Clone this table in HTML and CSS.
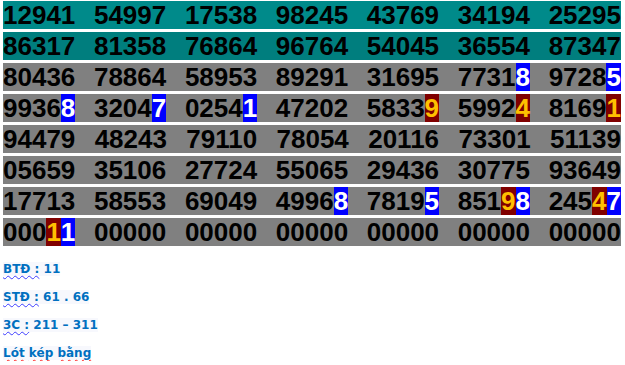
FILE: index.html
```html
<!DOCTYPE html>
<html>
<head>
<meta charset="utf-8">
<link rel="stylesheet" href="styles.css">
</head>
<body>
<div class="board">
  <div class="row teal1">
    <span class="num">12941</span><span class="num">54997</span><span class="num">17538</span><span class="num">98245</span><span class="num">43769</span><span class="num">34194</span><span class="num">25295</span>
  </div>
  <div class="row teal2">
    <span class="num">86317</span><span class="num">81358</span><span class="num">76864</span><span class="num">96764</span><span class="num">54045</span><span class="num">36554</span><span class="num">87347</span>
  </div>
  <div class="row gray">
    <span class="num">80436</span><span class="num">78864</span><span class="num">58953</span><span class="num">89291</span><span class="num">31695</span><span class="num">7731<b class="hb">8</b></span><span class="num">9728<b class="hb">5</b></span>
  </div>
  <div class="row gray">
    <span class="num">9936<b class="hb">8</b></span><span class="num">3204<b class="hb">7</b></span><span class="num">0254<b class="hb">1</b></span><span class="num">47202</span><span class="num">5833<b class="hr">9</b></span><span class="num">5992<b class="hr">4</b></span><span class="num">8169<b class="hr">1</b></span>
  </div>
  <div class="row gray">
    <span class="num">94479</span><span class="num">48243</span><span class="num">79110</span><span class="num">78054</span><span class="num">20116</span><span class="num">73301</span><span class="num">51139</span>
  </div>
  <div class="row gray">
    <span class="num">05659</span><span class="num">35106</span><span class="num">27724</span><span class="num">55065</span><span class="num">29436</span><span class="num">30775</span><span class="num">93649</span>
  </div>
  <div class="row gray">
    <span class="num">17713</span><span class="num">58553</span><span class="num">69049</span><span class="num">4996<b class="hb">8</b></span><span class="num">7819<b class="hb">5</b></span><span class="num">851<b class="hr">9</b><b class="hb">8</b></span><span class="num">245<b class="hr">4</b><b class="hb">7</b></span>
  </div>
  <div class="row gray">
    <span class="num">000<b class="hr">1</b><b class="hb">1</b></span><span class="num">00000</span><span class="num">00000</span><span class="num">00000</span><span class="num">00000</span><span class="num">00000</span><span class="num">00000</span>
  </div>
</div>
<div class="notes">
  <p class="note"><span class="mark"><span class="gram">BTĐ :</span> 11</span></p>
  <p class="note"><span class="mark"><span class="gram">STĐ :</span> 61 . 66</span></p>
  <p class="note"><span class="mark"><span class="gram">3C :</span> 211 – 311</span></p>
  <p class="note"><span class="mark"><span class="spell">Lót</span> <span class="spell">kép</span> <span class="spell">bằng</span></span></p>
</div>
</body>
</html>
```
FILE: styles.css
```css
html, body {
  margin: 0;
  padding: 0;
  background: #ffffff;
}
body {
  padding: 1px 4px 0 3px;
  font-family: "Liberation Sans", Arial, sans-serif;
}
.board {
  display: flex;
  flex-direction: column;
  gap: 3px;
  width: 618px;
}
.row {
  display: flex;
  justify-content: space-between;
  height: 28px;
  font-family: "Liberation Sans", Arial, sans-serif;
  font-weight: bold;
  font-size: 26px;
  line-height: 28px;
  color: #000000;
}
.teal1 { background: #008a8a; }
.teal2 { background: #007e7e; }
.gray { background: #808080; }
.num {
  display: flex;
  white-space: nowrap;
}
.hb, .hr {
  display: inline-block;
  height: 28px;
  font-weight: bold;
}
.hb {
  background: #0000ff;
  color: #ffffff;
}
.hr {
  background: #800000;
  color: #ffc000;
}
.notes {
  margin-top: 15px;
  display: flex;
  flex-direction: column;
  gap: 12px;
}
.note {
  margin: 0;
  font-family: "DejaVu Sans", Verdana, sans-serif;
  font-weight: bold;
  font-size: 12px;
  line-height: 16px;
  color: #0070c0;
}
.mark {
  background: #f7f8fd;
}
.gram {
  text-decoration: underline wavy #3c3cff;
  text-decoration-thickness: 1px;
  text-underline-offset: 2px;
}
.spell {
  text-decoration: underline wavy #ff2a2a;
  text-decoration-thickness: 1px;
  text-underline-offset: 2px;
}
```
